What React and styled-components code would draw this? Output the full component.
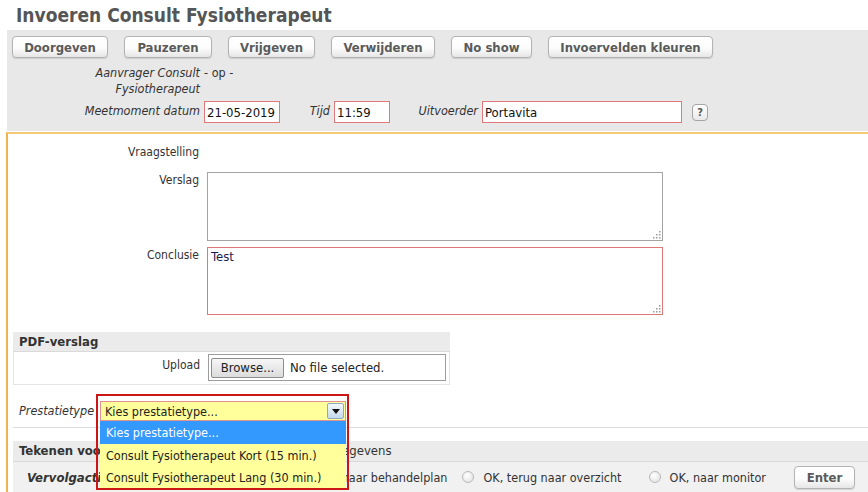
import React from "react";
import styled, { createGlobalStyle } from "styled-components";

const sans = `"DejaVu Sans Condensed", "DejaVu Sans", Verdana, sans-serif`;

const GlobalStyle = createGlobalStyle`
  html, body {
    margin: 0;
    padding: 0;
    background: #fff;
  }
  body {
    font-family: ${sans};
    font-stretch: condensed;
    font-size: 12px;
    color: #333;
    overflow: hidden;
  }
  * {
    box-sizing: border-box;
  }
`;

const Page = styled.div`
  width: 868px;
  height: 492px;
  overflow: hidden;
`;

const Title = styled.h1`
  margin: 0;
  height: 30px;
  padding: 3px 0 0 16px;
  font-size: 19px;
  line-height: 24px;
  font-weight: bold;
  color: #555;
`;

const Panel = styled.div`
  margin-left: 7px;
  height: 101px;
  padding: 6px 0 0 5px;
  background: #e8e8e8;
`;

const Toolbar = styled.div`
  display: flex;
  gap: 16px;
`;

const ToolButton = styled.button`
  width: ${(p) => p.$w}px;
  height: ${(p) => p.$h || 22}px;
  padding: 0;
  border: 1px solid #b3b3b3;
  border-radius: 4px;
  background: linear-gradient(#ffffff 0%, #fcfcfc 55%, #e6e6e6 100%);
  box-shadow: 0 1px 1px rgba(0, 0, 0, 0.12);
  font-family: ${sans};
  font-stretch: condensed;
  font-size: 13px;
  font-weight: bold;
  color: #5a5a5a;
`;

const InfoGrid = styled.div`
  margin-top: 7px;
  padding-left: 68px;
`;

const InfoRow = styled.div`
  display: flex;
  align-items: flex-start;
  margin-top: ${(p) => p.$mt || 0}px;
`;

const InfoLabel = styled.div`
  width: ${(p) => p.$w}px;
  padding: ${(p) => p.$pt || 0}px 4px 0 0;
  text-align: right;
  font-style: italic;
  font-size: 12.5px;
  line-height: 16px;
`;

const InfoValue = styled.div`
  font-size: 12.5px;
  line-height: 16px;
`;

const TextInput = styled.input`
  width: ${(p) => p.$w}px;
  height: 22px;
  padding: 0 2px;
  border: 1px solid #e07a7a;
  background: #fff;
  font-family: ${sans};
  font-stretch: condensed;
  font-size: 13px;
  color: #111;
  outline: none;
`;

const HelpButton = styled.span`
  display: flex;
  align-items: center;
  justify-content: center;
  width: 16px;
  height: 17px;
  margin: 3px 0 0 10px;
  border: 1px solid #a5a5a5;
  border-radius: 4px;
  background: linear-gradient(#fff, #e9e9e9);
  font-size: 11px;
  font-weight: bold;
  color: #555;
`;

const ContentBox = styled.div`
  margin: 1px 0 0 6px;
  height: 360px;
  padding-top: 10px;
  border-top: 2px solid #f5c878;
  border-left: 2px solid #f0b24a;
`;

const FormRow = styled.div`
  display: flex;
  align-items: flex-start;
  margin-bottom: ${(p) => p.$mb || 0}px;
`;

const FormLabel = styled.div`
  width: 195px;
  padding-right: 4px;
  text-align: right;
  line-height: 16px;
`;

const AreaWrap = styled.div`
  position: relative;
  margin-left: 4px;
`;

const TextArea = styled.textarea`
  display: block;
  width: 456px;
  height: ${(p) => p.$h}px;
  padding: 1px 3px;
  border: 1px solid ${(p) => (p.$required ? "#dc7878" : "#a3a3a3")};
  resize: none;
  font-family: ${sans};
  font-stretch: condensed;
  font-size: 13px;
  line-height: 16px;
  color: #1c1c4e;
  outline: none;
`;

const Grip = styled.svg`
  position: absolute;
  right: 2px;
  bottom: 2px;
`;

const Section = styled.div`
  margin: ${(p) => p.$mt || 0}px 0 0 5px;
  width: ${(p) => p.$w || 855}px;
`;

const SectionHead = styled.div`
  height: ${(p) => p.$h || 20}px;
  padding-left: 6px;
  background: #ebebeb;
  border-bottom: 1px solid #dadada;
  font-size: 13px;
  line-height: 19px;
  color: #333;
  white-space: nowrap;
`;

const HeadNote = styled.span`
  margin-left: 48px;
  font-weight: normal;
`;

const SectionBody = styled.div`
  display: flex;
  height: 33px;
  border: 1px solid #e3e3e3;
  border-top: none;
`;

const UploadLabel = styled.div`
  width: 190px;
  padding: 5px 4px 0 0;
  text-align: right;
  line-height: 16px;
`;

const FileBox = styled.div`
  display: flex;
  align-items: center;
  width: 238px;
  height: 27px;
  margin: 2px 0 0 4px;
  padding: 0 2px;
  border: 1px solid #9c9c9c;
  font-size: 13px;
  color: #222;
`;

const BrowseButton = styled.span`
  display: flex;
  align-items: center;
  justify-content: center;
  width: 73px;
  height: 20px;
  margin-right: 6px;
  border: 1px solid #8c8c8c;
  border-radius: 2px;
  background: linear-gradient(#f7f7f7, #dcdcdc);
`;

const PrestatieRow = styled.div`
  display: flex;
  align-items: flex-start;
  margin-left: 5px;
  height: 43px;
  padding-top: 16px;
  border-bottom: 1px solid #dedede;
`;

const PrestatieLabel = styled.div`
  width: 87px;
  padding: 2px 0 0 6px;
  font-style: italic;
  font-size: 12.5px;
  line-height: 16px;
`;

const SelectWrap = styled.div`
  position: relative;
  width: 246px;
  height: 20px;
`;

const SelectBox = styled.div`
  display: flex;
  align-items: center;
  height: 20px;
  padding: 0 1px 0 4px;
  border: 1px solid #e39090;
  background: #ffff9c;
  font-size: 12.5px;
  color: #222;
`;

const SelectText = styled.span`
  flex: 1;
`;

const ArrowButton = styled.span`
  display: flex;
  align-items: center;
  justify-content: center;
  width: 17px;
  height: 16px;
  border: 1px solid #8fa8c4;
  border-radius: 2px;
  background: linear-gradient(#f3f8fd, #c3daee);
`;

const Options = styled.ul`
  position: absolute;
  top: 20px;
  left: 0;
  width: 246px;
  margin: 0;
  padding: 0;
  list-style: none;
  background: #ffff9c;
  font-size: 12.5px;
  z-index: 2;
`;

const Option = styled.li`
  height: ${(p) => p.$h}px;
  padding-left: 6px;
  line-height: ${(p) => p.$h}px;
  background: ${(p) => (p.$active ? "#3399ff" : "#ffff9c")};
  color: ${(p) => (p.$active ? "#fff" : "#222")};
  white-space: nowrap;
`;

const Marker = styled.div`
  position: absolute;
  top: -7px;
  left: -4px;
  width: 253px;
  height: 96px;
  border: 2px solid #cc1616;
  z-index: 3;
  pointer-events: none;
`;

const ActionRow = styled.div`
  display: flex;
  align-items: center;
  height: 30px;
  padding: 0 13px 0 14px;
  background: #f1f1f1;
  font-size: 12.5px;
`;

const ActionLabel = styled.span`
  font-size: 13px;
  font-weight: bold;
  font-style: italic;
  margin-right: auto;
`;

const RadioOption = styled.label`
  display: flex;
  align-items: center;
  gap: 9px;
  margin-right: ${(p) => p.$gap}px;
  white-space: nowrap;
`;

const Radio = styled.span`
  width: 12px;
  height: 12px;
  border: 1px solid #b9b9b9;
  border-radius: 50%;
  background: radial-gradient(circle at 40% 35%, #ffffff, #dedede);
`;

const buttons = [
  ["Doorgeven", 96],
  ["Pauzeren", 88],
  ["Vrijgeven", 87],
  ["Verwijderen", 104],
  ["No show", 81],
  ["Invoervelden kleuren", 165],
];

const options = [
  "Kies prestatietype...",
  "Consult Fysiotherapeut Kort (15 min.)",
  "Consult Fysiotherapeut Lang (30 min.)",
];

const ResizeGrip = () => (
  <Grip width="10" height="10" viewBox="0 0 10 10">
    {[
      [8, 2],
      [8, 5],
      [5, 5],
      [8, 8],
      [5, 8],
      [2, 8],
    ].map(([x, y]) => (
      <rect key={`${x}-${y}`} x={x} y={y} width="1.5" height="1.5" fill="#9a9a9a" />
    ))}
  </Grip>
);

export default function App() {
  return (
    <Page>
      <GlobalStyle />
      <Title>Invoeren Consult Fysiotherapeut</Title>

      <Panel>
        <Toolbar>
          {buttons.map(([label, w]) => (
            <ToolButton key={label} $w={w}>
              {label}
            </ToolButton>
          ))}
        </Toolbar>

        <InfoGrid>
          <InfoRow>
            <InfoLabel $w={124}>Aanvrager Consult Fysiotherapeut</InfoLabel>
            <InfoValue>- op -</InfoValue>
          </InfoRow>
          <InfoRow $mt={4}>
            <InfoLabel $w={124} $pt={2}>Meetmoment datum</InfoLabel>
            <TextInput $w={76} defaultValue="21-05-2019" />
            <InfoLabel $w={54} $pt={2}>Tijd</InfoLabel>
            <TextInput $w={56} defaultValue="11:59" />
            <InfoLabel $w={92} $pt={2}>Uitvoerder</InfoLabel>
            <TextInput $w={200} defaultValue="Portavita" />
            <HelpButton>?</HelpButton>
          </InfoRow>
        </InfoGrid>
      </Panel>

      <ContentBox>
        <FormRow $mb={12}>
          <FormLabel>Vraagstelling</FormLabel>
        </FormRow>
        <FormRow $mb={6}>
          <FormLabel>Verslag</FormLabel>
          <AreaWrap>
            <TextArea $h={69} defaultValue="" />
            <ResizeGrip />
          </AreaWrap>
        </FormRow>
        <FormRow>
          <FormLabel>Conclusie</FormLabel>
          <AreaWrap>
            <TextArea $h={68} $required defaultValue="Test" />
            <ResizeGrip />
          </AreaWrap>
        </FormRow>

        <Section $mt={17} $w={437}>
          <SectionHead>
            <strong>PDF-verslag</strong>
          </SectionHead>
          <SectionBody>
            <UploadLabel>Upload</UploadLabel>
            <FileBox>
              <BrowseButton>Browse...</BrowseButton>
              No file selected.
            </FileBox>
          </SectionBody>
        </Section>

        <PrestatieRow>
          <PrestatieLabel>Prestatietype</PrestatieLabel>
          <SelectWrap>
            <SelectBox>
              <SelectText>Kies prestatietype...</SelectText>
              <ArrowButton>
                <svg width="8" height="5" viewBox="0 0 8 5">
                  <path d="M0 0 H8 L4 5 Z" fill="#111" />
                </svg>
              </ArrowButton>
            </SelectBox>
            <Options>
              {options.map((o, i) => (
                <Option key={o} $active={i === 0} $h={i === 2 ? 22 : 23}>
                  {o}
                </Option>
              ))}
            </Options>
            <Marker />
          </SelectWrap>
        </PrestatieRow>

        <Section $mt={13}>
          <SectionHead $h={21}>
            <strong>Tekenen voor akkoord</strong>
            <HeadNote>Controle ingevoerde gegevens</HeadNote>
          </SectionHead>
          <ActionRow>
            <ActionLabel>Vervolgactie</ActionLabel>
            <RadioOption $gap={15}>
              <Radio />
              OK, naar behandelplan
            </RadioOption>
            <RadioOption $gap={27}>
              <Radio />
              OK, terug naar overzicht
            </RadioOption>
            <RadioOption $gap={28}>
              <Radio />
              OK, naar monitor
            </RadioOption>
            <ToolButton $w={61} $h={23}>
              Enter
            </ToolButton>
          </ActionRow>
        </Section>
      </ContentBox>
    </Page>
  );
}
